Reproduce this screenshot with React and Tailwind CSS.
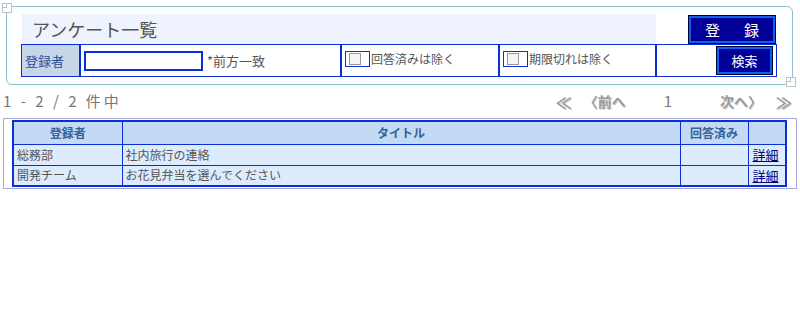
import React from "react";

const font = { fontFamily: '"Noto Sans CJK JP", "Noto Sans", sans-serif' };

function CornerImg({ className }) {
  return (
    <div className={"absolute w-[10px] h-[10px] border border-[#b8c4c8] bg-white " + className}>
      <div className="absolute left-0 top-0 w-[4px] h-[4px] border-r border-b border-[#b8c4c8]" />
    </div>
  );
}

function Check() {
  return (
    <span className="inline-flex items-center justify-center w-[25px] h-[16px] border border-[#1030d0] mr-[1px]">
      <span className="w-[12px] h-[12px] border border-[#999] bg-[#f4f4f4] ml-[-6px]" />
    </span>
  );
}

function NavBtn({ children, className = "" }) {
  return (
    <span
      className={"text-[14px] font-bold text-[#9a9a9a] [text-shadow:1px_1px_0_#d8d8d8] " + className}
    >
      {children}
    </span>
  );
}

const B = "border border-[#0b2fd4]";

export default function App() {
  return (
    <div className="relative w-[800px] h-[320px] bg-white text-[13px] text-[#555]" style={font}>
      <CornerImg className="left-[2px] top-[3px]" />
      <CornerImg className="left-[786px] top-[77px]" />

      <div className="ml-[6px] pt-[6px]">
        <div className="w-[787px] h-[79px] border border-[#8cbfcc] rounded-[6px] pt-[7px] pl-[14px]">
          <div className="flex">
            <div className="ml-[1px] w-[634px] h-[30px] bg-[#eef3fd] flex items-center pl-[10px] text-[18px] text-[#555] leading-none">
              アンケート一覧
            </div>
            <div className="ml-[32px] mt-[1px] w-[88px] h-[29px] border border-[#000033] bg-[#000099] p-0">
              <div className="w-full h-full border-2 border-[#1060f0] flex items-center justify-between px-[14px] text-white text-[15px] leading-none">
                <span>登</span>
                <span>録</span>
              </div>
            </div>
          </div>
          <div className="flex w-[756px] h-[33px] border-2 border-[#0b2fd4] [border-width:1.5px]">
            <div className="w-[59px] bg-[#c4d6e8] border-r-2 border-[#0b2fd4] flex items-center pl-[3px] text-[#2a4e9a] text-[13px]">
              登録者
            </div>
            <div className="w-[261px] border-r-2 border-[#0b2fd4] flex items-center pl-[3px]">
              <div className="w-[119px] h-[20px] border-2 border-[#0b2fd4] bg-white" />
              <span className="ml-[4px] text-[13px]">*前方一致</span>
            </div>
            <div className="w-[158px] border-r-2 border-[#0b2fd4] flex items-center pl-[3px] pb-[3px]">
              <Check />
              <span className="text-[12px] leading-[16px]">回答済みは除く</span>
            </div>
            <div className="w-[157px] border-r-2 border-[#0b2fd4] flex items-center pl-[3px] pb-[3px]">
              <Check />
              <span className="text-[12px] leading-[16px]">期限切れは除く</span>
            </div>
            <div className="flex-1 flex items-center justify-end pr-[3px]">
              <div className="w-[57px] h-[29px] border border-[#000033] bg-[#000099]">
                <div className="w-full h-full border-2 border-[#1060f0] flex items-center justify-center text-white text-[13px] leading-none">
                  検索
                </div>
              </div>
            </div>
          </div>
        </div>
      </div>

      <div className="flex items-center h-[33px] pl-[3px] pr-[8px]">
        <span className="text-[15px] text-[#777] tracking-[3px]">1 - 2 / 2 件中</span>
        <div className="ml-auto flex items-center">
          <NavBtn className="text-[16px]">≪</NavBtn>
          <NavBtn className="ml-[12px]">〈前へ</NavBtn>
          <span className="ml-[38px] text-[15px] text-[#777]">1</span>
          <NavBtn className="ml-[48px]">次へ〉</NavBtn>
          <NavBtn className="ml-[14px] text-[16px]">≫</NavBtn>
        </div>
      </div>

      <div className="ml-[3px] w-[794px] border border-[#a8a8d8] px-[8px] py-[1px]">
        <table className="w-[775px] border-collapse border-2 border-[#0b2fd4] text-[12px] leading-none">
          <thead>
            <tr className="bg-[#c2daf3] h-[23px] text-[#35629a] font-bold">
              <th className={"w-[109px] font-bold " + B}>登録者</th>
              <th className={"w-[558px] font-bold " + B}>タイトル</th>
              <th className={"w-[68px] font-bold " + B}>回答済み</th>
              <th className={B}></th>
            </tr>
          </thead>
          <tbody>
            {[
              ["総務部", "社内旅行の連絡"],
              ["開発チーム", "お花見弁当を選んでください"],
            ].map(([a, b]) => (
              <tr key={a} className="bg-[#ddecfc] h-[21px] text-[#555]">
                <td className={"pl-[3px] " + B}>{a}</td>
                <td className={"pl-[3px] " + B}>{b}</td>
                <td className={B}></td>
                <td className={"pl-[4px] " + B}>
                  <span className="underline text-[#000080] text-[13px]">詳細</span>
                </td>
              </tr>
            ))}
          </tbody>
        </table>
      </div>
    </div>
  );
}
